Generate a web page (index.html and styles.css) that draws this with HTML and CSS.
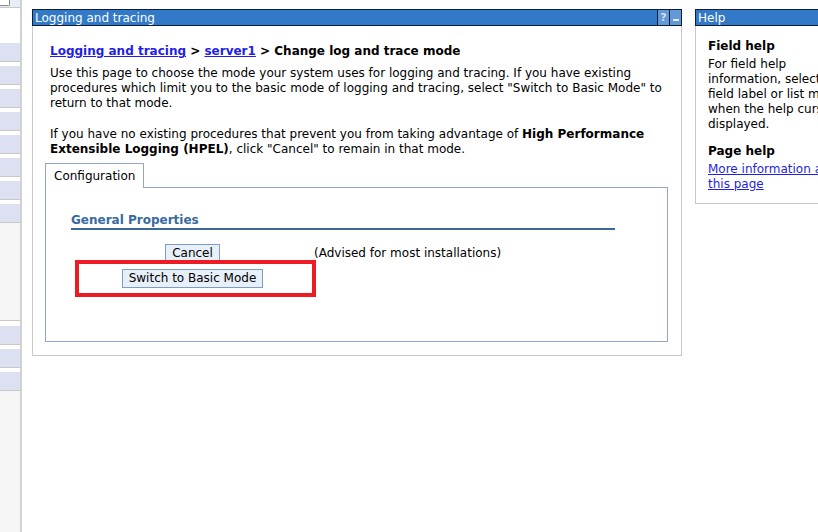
FILE: index.html
```html
<!DOCTYPE html>
<html lang="en">
<head>
  <meta charset="UTF-8">
  <meta name="viewport" content="width=device-width, initial-scale=1.0">
  <title>Logging and tracing</title>
  <link rel="stylesheet" href="styles.css">
</head>
<body>
  <div class="nav">
    <div class="nav-top"><span class="nav-select"></span></div>
    <ul class="nav-list">
      <li></li>
      <li></li>
      <li></li>
      <li></li>
      <li></li>
      <li></li>
      <li></li>
      <li></li>
    </ul>
    <ul class="nav-list nav-lower">
      <li></li>
      <li></li>
      <li></li>
    </ul>
  </div>

  <div class="workspace">
    <div class="portlet main">
      <div class="titlebar">
        <span class="title">Logging and tracing</span>
        <span class="tools"><span class="tool">?</span><span class="tool tool-min"></span></span>
      </div>
      <div class="portlet-body">
        <h1 class="crumbs"><a href="#">Logging and tracing</a> &gt; <a href="#">server1</a> &gt; Change log and trace mode</h1>
        <p>Use this page to choose the mode your system uses for logging and tracing. If you have existing<br>procedures which limit you to the basic mode of logging and tracing, select "Switch to Basic Mode" to<br>return to that mode.</p>
        <p>If you have no existing procedures that prevent you from taking advantage of <b>High Performance<br>Extensible Logging (HPEL)</b>, click "Cancel" to remain in that mode.</p>

        <div class="tabs"><span class="tab">Configuration</span></div>
        <div class="tabpanel">
          <h2 class="section">General Properties</h2>
          <table class="modes">
            <tr>
              <td class="btn-cell"><button>Cancel</button></td>
              <td class="note">(Advised for most installations)</td>
            </tr>
            <tr>
              <td class="btn-cell"><button>Switch to Basic Mode</button></td>
              <td></td>
            </tr>
          </table>
          <div class="highlight"></div>
        </div>
      </div>
    </div>

    <div class="portlet help">
      <div class="titlebar">
        <span class="title">Help</span>
      </div>
      <div class="portlet-body">
        <h3>Field help</h3>
        <p>For field help<br>information, select the<br>field label or list marker<br>when the help cursor is<br>displayed.</p>
        <h3>Page help</h3>
        <p><a href="#">More information about<br>this page</a></p>
      </div>
    </div>
  </div>
</body>
</html>
```

FILE: styles.css
```css
html, body {
  height: 100%;
}
body {
  margin: 0;
  display: flex;
  overflow: hidden;
  font-family: "DejaVu Sans", Verdana, sans-serif;
  font-size: 12px;
  line-height: 15px;
  color: #000;
  background: #fff;
}
a {
  color: #1f1fe6;
}

/* left navigation strip */
.nav {
  width: 20px;
  flex: none;
  background: #f5f5f5;
  border-right: 2px solid #d2d2d2;
}
.nav-top {
  height: 43px;
  background: #fff;
}
.nav-select {
  display: block;
  height: 7px;
  background: #e9edf5;
  border-bottom: 1px solid #c8c8c8;
  position: relative;
}
.nav-select::before {
  content: "";
  position: absolute;
  left: 0;
  top: 0;
  width: 9px;
  height: 5px;
  border: 1px solid #8a8a8a;
  border-top: none;
  border-left: none;
  border-radius: 0 0 2px 0;
  background: #fff;
}
.nav-list {
  list-style: none;
  margin: 0;
  padding: 0;
  background: #fff;
}
.nav-list li {
  height: 18px;
  background: #dde0f0;
  border-bottom: 1px solid #c8c8c8;
  margin-bottom: 4px;
}
.nav-lower {
  margin-top: 97px;
  padding-top: 5px;
  border-top: 1px solid #c8c8c8;
}

/* portlets */
.workspace {
  display: flex;
  align-items: flex-start;
  gap: 13px;
  padding: 9px 0 0 10px;
}
.portlet {
  flex: none;
}
.main {
  width: 650px;
}
.help {
  width: 220px;
}
.titlebar {
  height: 15px;
  background: #3279c7;
  border: 1px solid #0f1d36;
  color: #fff;
  display: flex;
  justify-content: space-between;
  line-height: 15px;
}
.title {
  padding: 1px 0 0 2px;
}
.tools {
  display: flex;
}
.tool {
  width: 11px;
  height: 15px;
  background: #6399d6;
  border-left: 1px solid #0f1d36;
  font-weight: bold;
  font-size: 11px;
  line-height: 16px;
  text-align: center;
  color: #d3dfee;
}
.tool-min {
  position: relative;
}
.tool-min::after {
  content: "";
  position: absolute;
  left: 3px;
  top: 9px;
  width: 6px;
  height: 2px;
  background: #e6eef8;
}
.portlet-body {
  border: 1px solid #c9c9c9;
  border-top: none;
  padding: 17px 13px 13px 12px;
}
.crumbs {
  margin: 0;
  padding: 1px 0 0 5px;
  font-size: 12px;
  line-height: 15px;
}
.main p {
  margin: 7px 0 16px;
  padding-left: 5px;
}
.main p + p {
  margin: 0 0 6px;
}

/* tab and panel */
.tabs {
  display: flex;
}
.tab {
  width: 89px;
  height: 24px;
  line-height: 24px;
  padding-left: 8px;
  border: 1px solid #8fa6cf;
  border-bottom: none;
  background: #fff;
  margin-bottom: -1px;
  position: relative;
  z-index: 1;
}
.tabpanel {
  position: relative;
  box-sizing: border-box;
  height: 155px;
  border: 1px solid #8fa6cf;
  padding: 25px 52px 0 25px;
}
.section {
  margin: 0;
  font-size: 12px;
  line-height: 15px;
  color: #386a9f;
  border-bottom: 2px solid #3a6898;
}
.modes {
  border-collapse: collapse;
  margin-top: 11px;
}
.modes td {
  height: 25px;
  padding: 0;
  vertical-align: middle;
}
.btn-cell {
  width: 243px;
  text-align: center;
}
.note {
  padding-left: 1px;
}
.modes button {
  font: inherit;
  height: 19px;
  padding: 0 6px;
  background: #e7eff9;
  border: 1px solid #7e9cc4;
  color: #000;
}
.highlight {
  position: absolute;
  left: 29px;
  top: 72px;
  width: 241px;
  height: 37px;
  box-sizing: border-box;
  border: 4px solid #ed1c24;
}

/* help portlet */
.help .portlet-body {
  padding: 13px 12px 11px;
}
.help h3 {
  margin: 0;
  font-size: 12px;
  line-height: 15px;
}
.help p {
  margin: 3px 0 12px;
}
.help p:last-child {
  margin-bottom: 0;
}
```
